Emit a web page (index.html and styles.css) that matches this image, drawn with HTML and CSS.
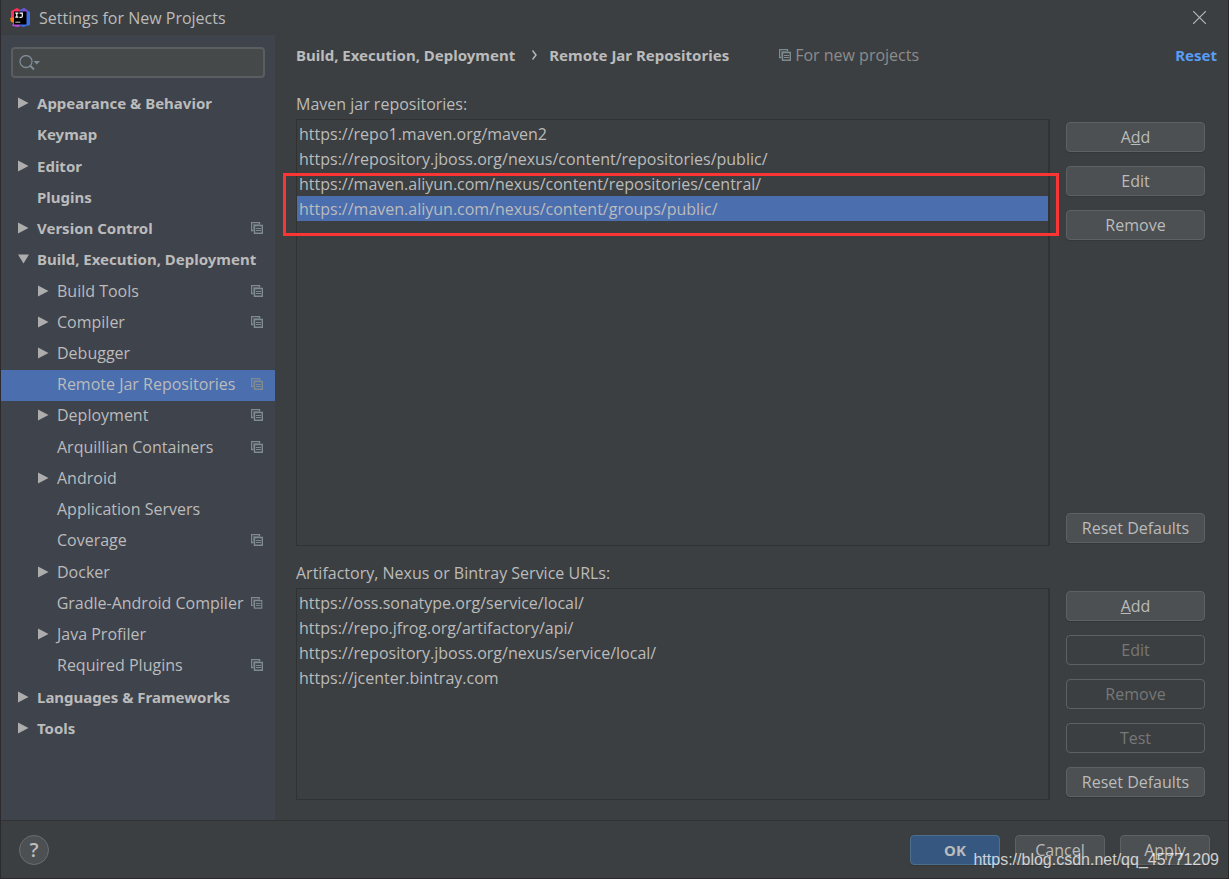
FILE: index.html
```
<!DOCTYPE html>
<html lang="en">
<head>
<meta charset="utf-8">
<title>Settings for New Projects</title>
<link rel="stylesheet" href="styles.css">
</head>
<body>
<svg class="defs" width="0" height="0" aria-hidden="true">
  <symbol id="copy" viewBox="0 0 12 12"><path d="M2 8.500H.5V.5H8.500V2" fill="none" stroke="currentColor" stroke-width="1.400"/><path d="M2.500 9.500V2.500H9.500" fill="none" stroke="currentColor" opacity=".5"/><path d="M3.500 3.500h7.800v7.800h-7.800z" fill="none" stroke="currentColor" stroke-width="1.400"/><path d="M5 6.500h5M5 8.500h5" stroke="currentColor"/></symbol>
  <symbol id="right" viewBox="0 0 12 12"><path d="M0 0L11.5 6 0 12z" fill="currentColor"/></symbol>
  <symbol id="down" viewBox="0 0 12 12"><path d="M0 1H12L6 11z" fill="currentColor"/></symbol>
</svg>
<div class="dialog">
  <header class="titlebar">
    <svg class="logo" viewBox="0 0 20 20" aria-hidden="true">
      <path d="M1 3L7 0l5 3-5 8-6 1z" fill="#fe315d"/>
      <path d="M0 10l5-1v6l-4-1z" fill="#f97a12"/>
      <path d="M10 2l4-2 6 4v13l-7 2-6-3z" fill="#3b6fe8"/>
      <path d="M11 2l3-2 4 3-2 4z" fill="#7a4fd0"/>
      <path d="M2 18l2-5 7 5-3 1z" fill="#b14bd8"/>
      <path d="M4 3.500h12.500v13H4z" fill="#000"/>
      <path d="M5.300 5.200h3M6.800 5.200v4M5.300 9.200h3M9.500 5.200h2.800v3q0 1.200-1.300 1.200H9.500" fill="none" stroke="#fff" stroke-width="1.200"/>
      <path d="M5.300 14.200h5" stroke="#aaa" stroke-width="1.200"/>
    </svg>
    <h1 class="title">Settings for New Projects</h1>
    <button class="close" aria-label="Close"><svg viewBox="0 0 12 12"><path d="M0 0l12 12M12 0L0 12" stroke="currentColor"/></svg></button>
  </header>
  <div class="body">
    <aside class="sidebar">
      <label class="search">
        <svg viewBox="0 0 22 16" aria-hidden="true"><circle cx="7" cy="6.500" r="6" fill="none" stroke="currentColor" stroke-width="1.300"/><path d="M11 10.500l4 4" stroke="currentColor" stroke-width="2"/><path d="M14.500 6H21l-3.200 3.500z" fill="currentColor"/></svg>
        <input type="text" aria-label="Search settings">
      </label>
      <nav class="tree" aria-label="Settings">
        <button class="node top"><svg class="arrow"><use href="#right"/></svg><span>Appearance &amp; Behavior</span></button>
        <button class="node top"><i class="arrow"></i><span>Keymap</span></button>
        <button class="node top"><svg class="arrow"><use href="#right"/></svg><span>Editor</span></button>
        <button class="node top"><i class="arrow"></i><span>Plugins</span></button>
        <button class="node top"><svg class="arrow"><use href="#right"/></svg><span>Version Control</span><svg class="copy"><use href="#copy"/></svg></button>
        <button class="node top"><svg class="arrow"><use href="#down"/></svg><span>Build, Execution, Deployment</span></button>
        <button class="node sub"><svg class="arrow"><use href="#right"/></svg><span>Build Tools</span><svg class="copy"><use href="#copy"/></svg></button>
        <button class="node sub"><svg class="arrow"><use href="#right"/></svg><span>Compiler</span><svg class="copy"><use href="#copy"/></svg></button>
        <button class="node sub"><svg class="arrow"><use href="#right"/></svg><span>Debugger</span></button>
        <button class="node sub selected" aria-current="page"><i class="arrow"></i><span>Remote Jar Repositories</span><svg class="copy"><use href="#copy"/></svg></button>
        <button class="node sub"><svg class="arrow"><use href="#right"/></svg><span>Deployment</span><svg class="copy"><use href="#copy"/></svg></button>
        <button class="node sub"><i class="arrow"></i><span>Arquillian Containers</span><svg class="copy"><use href="#copy"/></svg></button>
        <button class="node sub"><svg class="arrow"><use href="#right"/></svg><span>Android</span></button>
        <button class="node sub"><i class="arrow"></i><span>Application Servers</span></button>
        <button class="node sub"><i class="arrow"></i><span>Coverage</span><svg class="copy"><use href="#copy"/></svg></button>
        <button class="node sub"><svg class="arrow"><use href="#right"/></svg><span>Docker</span></button>
        <button class="node sub"><i class="arrow"></i><span>Gradle-Android Compiler</span><svg class="copy"><use href="#copy"/></svg></button>
        <button class="node sub"><svg class="arrow"><use href="#right"/></svg><span>Java Profiler</span></button>
        <button class="node sub"><i class="arrow"></i><span>Required Plugins</span><svg class="copy"><use href="#copy"/></svg></button>
        <button class="node top"><svg class="arrow"><use href="#right"/></svg><span>Languages &amp; Frameworks</span></button>
        <button class="node top"><svg class="arrow"><use href="#right"/></svg><span>Tools</span></button>
      </nav>
    </aside>
    <main class="content">
      <div class="heading">
        <span class="crumb">Build, Execution, Deployment</span>
        <svg class="chevron" viewBox="0 0 5 10" aria-hidden="true"><path d="M.5.500L4 5 .5 9.500" fill="none" stroke="currentColor" stroke-width="1.400"/></svg>
        <span class="crumb">Remote Jar Repositories</span>
        <span class="scope"><svg class="copy"><use href="#copy"/></svg>For new projects</span>
        <a class="reset" href="#">Reset</a>
      </div>
      <section class="group maven">
        <h2 class="label" id="maven">Maven jar repositories:</h2>
        <div class="panel">
          <ul class="list" role="listbox" aria-labelledby="maven">
            <li role="option">https://repo1.maven.org/maven2</li>
            <li role="option">https://repository.jboss.org/nexus/content/repositories/public/</li>
            <li role="option">https://maven.aliyun.com/nexus/content/repositories/central/</li>
            <li role="option" class="selected" aria-selected="true">https://maven.aliyun.com/nexus/content/groups/public/</li>
          </ul>
          <div class="highlight"></div>
        </div>
        <div class="actions">
          <button class="btn">A<u>d</u>d</button>
          <button class="btn">Edit</button>
          <button class="btn">Remove</button>
          <button class="btn last">Reset Defaults</button>
        </div>
      </section>
      <section class="group services">
        <h2 class="label" id="services">Artifactory, Nexus or Bintray Service URLs:</h2>
        <div class="panel">
          <ul class="list" role="listbox" aria-labelledby="services">
            <li role="option">https://oss.sonatype.org/service/local/</li>
            <li role="option">https://repo.jfrog.org/artifactory/api/</li>
            <li role="option">https://repository.jboss.org/nexus/service/local/</li>
            <li role="option">https://jcenter.bintray.com</li>
          </ul>
        </div>
        <div class="actions">
          <button class="btn"><u>A</u>dd</button>
          <button class="btn" disabled>Edit</button>
          <button class="btn" disabled>Remove</button>
          <button class="btn" disabled>Test</button>
          <button class="btn last">Reset Defaults</button>
        </div>
      </section>
    </main>
  </div>
  <footer class="footer">
    <button class="help" aria-label="Help">?</button>
    <button class="btn primary">OK</button>
    <button class="btn">Cancel</button>
    <button class="btn">Apply</button>
    <span class="watermark">https://blog.csdn.net/qq_45771209</span>
  </footer>
</div>
</body>
</html>
```
FILE: styles.css
```
* { box-sizing: border-box; }
body { margin: 0; background: #3c3f41; color: #bbbbbb; font: 16px/20px "Open Sans", "Noto Sans", sans-serif; }
button, input { font: inherit; color: inherit; margin: 0; }
h1, h2, ul { margin: 0; padding: 0; font: inherit; list-style: none; }
.defs { position: absolute; }
.dialog { display: flex; flex-direction: column; min-height: 100vh; border: solid #2b2b2f; border-width: 0 1px 1px; }
.titlebar { display: flex; align-items: center; height: 35px; padding: 0 22px 0 9px; }
.logo { width: 20px; height: 20px; margin-right: 9px; }
.title { flex: 1; }
.close { display: flex; padding: 0; border: 0; background: none; }
.close svg { width: 13px; height: 13px; }
.body { flex: 1; display: flex; }
.sidebar { width: 274px; display: flex; flex-direction: column; background: #3f434c; padding: 12px 0 75px; }
.search { display: flex; align-items: center; height: 31px; margin: 0 10px 11px; padding: 0 6px; background: #45494a; border: 2px solid #5a5e60; border-radius: 4px; color: #7f8b96; }
.search svg { width: 22px; height: 16px; }
.search input { flex: 1; min-width: 0; border: 0; outline: 0; background: none; color: #bbbbbb; }
.tree { flex: 1; display: flex; flex-direction: column; }
.node { flex: 1; display: flex; align-items: center; gap: 8px; padding: 0 12px 3px 17px; border: 0; background: none; text-align: left; white-space: nowrap; }
.node span { flex: 1; }
.top { font: 700 15px/20px "Noto Sans", "Open Sans", sans-serif; }
.node.sub { padding-left: 37px; }
.arrow { width: 11px; height: 12px; color: #adadad; }
.copy { width: 12px; height: 12px; color: #7f8b91; }
.selected { background: #4b6eaf; }
.content { flex: 1; display: flex; flex-direction: column; padding: 10px 23px 20px 21px; }
.heading { display: flex; align-items: center; margin-right: -12px; }
.crumb, .reset { font: 700 15px/20px "Noto Sans", "Open Sans", sans-serif; }
.chevron { width: 5px; height: 10px; margin: 0 12px 0 17px; }
.scope { display: flex; align-items: center; gap: 4px; margin-left: 50px; color: #8c8c8c; }
.reset { margin-left: auto; color: #589df6; text-decoration: none; }
.group { display: grid; grid-template-columns: 1fr 139px; grid-template-rows: auto 1fr; column-gap: 16px; }
.maven { flex: 1; margin-top: 29px; }
.services { margin-top: 17px; }
.label { grid-column: 1 / -1; margin-bottom: 5px; }
.panel { position: relative; }
.list { height: 100%; padding-top: 1px; border: 1px solid #323232; border-right-width: 2px; }
.list li { height: 25px; padding: 0 2px; line-height: 27px; }
.highlight { position: absolute; left: -13px; right: -9px; top: 54px; height: 63px; border: 3px solid #fb3434; }
.actions { display: flex; flex-direction: column; gap: 14px; padding: 3px 0; }
.btn { height: 30px; padding: 0; border: 1px solid #5e6163; border-radius: 4px; background: #4c5052; text-align: center; box-shadow: 0 1px 1px #353739; }
.btn:disabled { background: none; color: #777777; box-shadow: none; }
.last { margin-top: auto; }
.footer { position: relative; display: flex; align-items: center; gap: 15px; height: 58px; padding: 0 18px; border-top: 1px solid #323232; }
.footer .btn { width: 90px; }
.help { width: 30px; height: 30px; margin-right: auto; padding: 0; border: 1px solid #6a6e70; border-radius: 50%; background: #4c5052; font-size: 20px; font-weight: 600; }
.footer .primary { background: #365880; border-color: #4c708c; font: 700 15px/20px "Noto Sans", "Open Sans", sans-serif; }
.watermark { position: absolute; right: 9px; bottom: 8px; color: rgba(255, 255, 255, .75); font-family: "Liberation Sans", Arial, sans-serif; font-size: 16px; }
```
